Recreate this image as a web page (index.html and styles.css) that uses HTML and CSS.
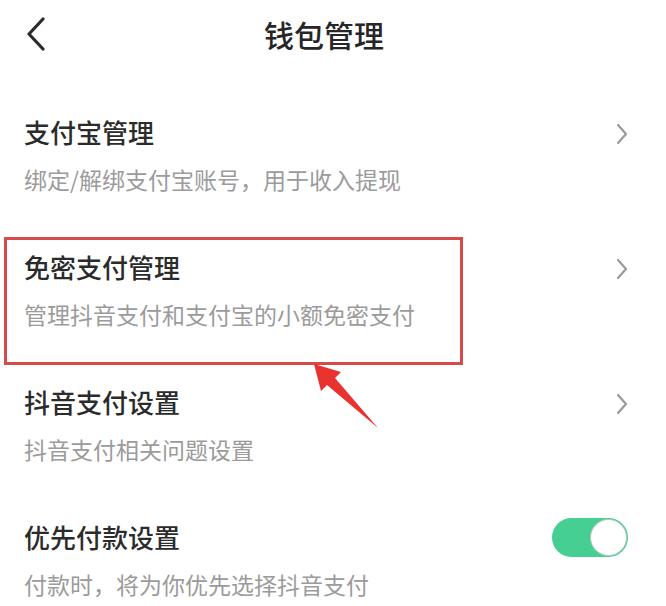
FILE: index.html
```html
<!DOCTYPE html>
<html lang="zh-CN">
<head>
<meta charset="utf-8">
<title>钱包管理</title>
<link rel="stylesheet" href="styles.css">
</head>
<body>
<div class="page">
  <header class="header">
    <svg class="back" width="20" height="34" viewBox="0 0 20 34"><path d="M17 2 L3 17 L17 32" fill="none" stroke="#2b2b2b" stroke-width="3.2" stroke-linecap="round" stroke-linejoin="round"/></svg>
    <h1 class="title">钱包管理</h1>
  </header>
  <ul class="list">
    <li class="row">
      <div class="row-main">
        <span class="row-title">支付宝管理</span>
        <svg class="chev" width="14" height="24" viewBox="0 0 14 24"><path d="M3 3 L11 12 L3 21" fill="none" stroke="#9a9a9a" stroke-width="2.2" stroke-linecap="round" stroke-linejoin="round"/></svg>
      </div>
      <div class="row-sub">绑定/解绑支付宝账号，用于收入提现</div>
    </li>
    <li class="row">
      <div class="row-main">
        <span class="row-title">免密支付管理</span>
        <svg class="chev" width="14" height="24" viewBox="0 0 14 24"><path d="M3 3 L11 12 L3 21" fill="none" stroke="#9a9a9a" stroke-width="2.2" stroke-linecap="round" stroke-linejoin="round"/></svg>
      </div>
      <div class="row-sub">管理抖音支付和支付宝的小额免密支付</div>
    </li>
    <li class="row">
      <div class="row-main">
        <span class="row-title">抖音支付设置</span>
        <svg class="chev" width="14" height="24" viewBox="0 0 14 24"><path d="M3 3 L11 12 L3 21" fill="none" stroke="#9a9a9a" stroke-width="2.2" stroke-linecap="round" stroke-linejoin="round"/></svg>
      </div>
      <div class="row-sub">抖音支付相关问题设置</div>
    </li>
    <li class="row">
      <div class="row-main">
        <span class="row-title">优先付款设置</span>
        <span class="toggle"><span class="knob"></span></span>
      </div>
      <div class="row-sub">付款时，将为你优先选择抖音支付</div>
    </li>
  </ul>
  <div class="highlight"></div>
  <svg class="arrow" width="80" height="80" viewBox="300 355 80 80"><polygon points="314,364 341,372 335,378 378,428 327,385 321,391" fill="#e8332f"/></svg>
</div>
</body>
</html>
```

FILE: styles.css
```css
html, body {
  margin: 0;
  padding: 0;
  background: #ffffff;
}
body {
  font-family: "Noto Sans CJK SC", "Noto Sans", sans-serif;
}
.page {
  position: relative;
  width: 666px;
  height: 606px;
  overflow: hidden;
  background: #ffffff;
}
.header {
  display: flex;
  align-items: center;
  height: 68px;
  padding-left: 26px;
  padding-right: 64px;
}
.back {
  flex: none;
}
.title {
  flex: 1;
  margin: 0;
  text-align: center;
  font-size: 30px;
  font-weight: 500;
  color: #262626;
  line-height: 40px;
}
.list {
  list-style: none;
  margin: 0;
  padding: 0;
  padding-top: 24px;
}
.row {
  height: 135px;
  box-sizing: border-box;
  padding: 22px 40px 0 24px;
}
.row-main {
  display: flex;
  align-items: center;
  justify-content: space-between;
  height: 36px;
}
.row-title {
  font-size: 26px;
  font-weight: 500;
  color: #2b2b2b;
  line-height: 36px;
}
.chev {
  margin-top: 4px;
  margin-right: -3px;
}
.row-sub {
  margin-top: 14px;
  font-size: 23px;
  line-height: 30px;
  color: #9b9b9b;
}
.toggle {
  position: relative;
  display: block;
  width: 76px;
  height: 39px;
  border-radius: 20px;
  background: #45cf92;
  margin-right: -2px;
}
.knob {
  position: absolute;
  right: 1px;
  top: 1px;
  width: 35px;
  height: 35px;
  border-radius: 50%;
  background: #ffffff;
  border: 1.5px solid #b9c4bf;
}
.highlight {
  position: absolute;
  left: 4px;
  top: 237px;
  width: 453px;
  height: 122px;
  border: 3px solid #d64a48;
}
.arrow {
  position: absolute;
  left: 300px;
  top: 355px;
}
```
